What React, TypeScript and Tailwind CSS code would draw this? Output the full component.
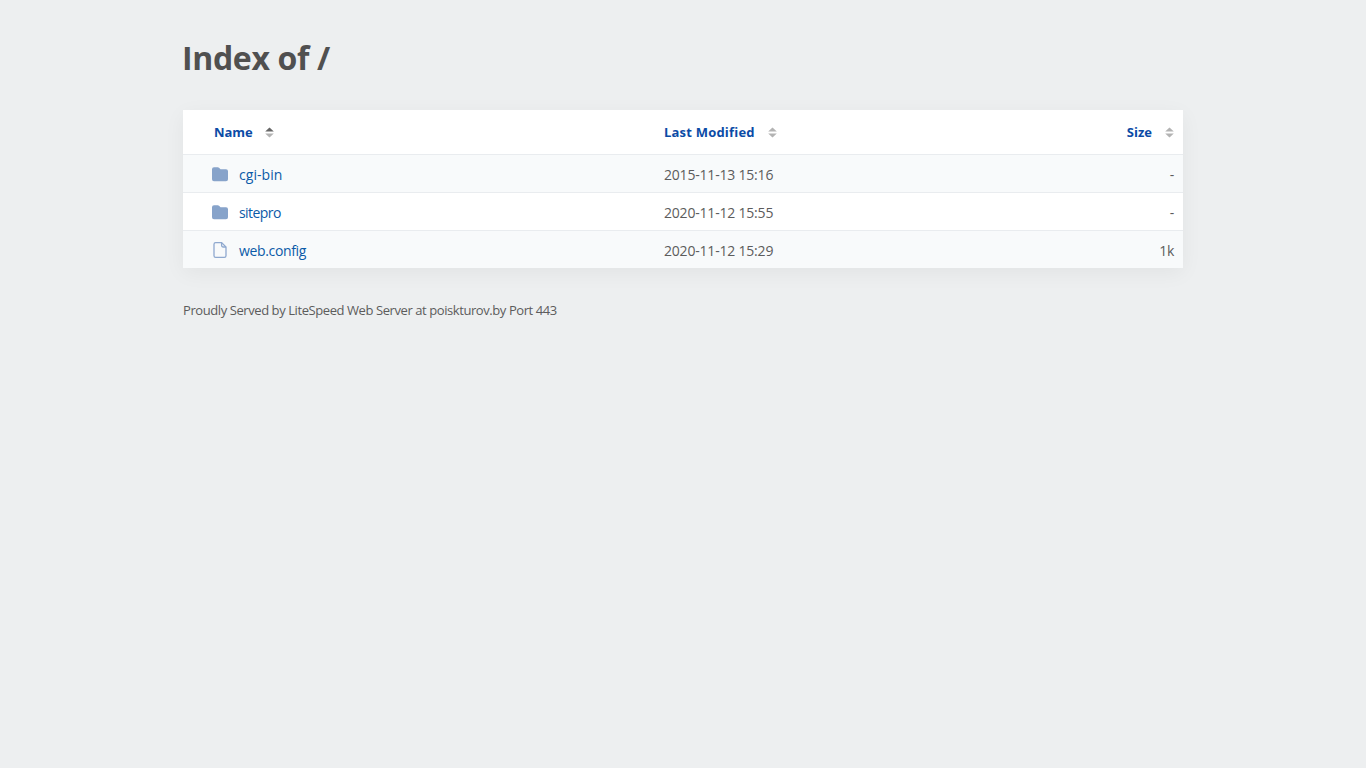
const folder = "M0 2.2A2 2 0 0 1 2 .2h3.7c.5 0 1 .2 1.35.55L8.5 2.2h5.5a2 2 0 0 1 2 2v8a2 2 0 0 1-2 2H2a2 2 0 0 1-2-2z";

function Sort({ active }: { active?: boolean }) {
  return (
    <svg width="9" height="11" viewBox="0 0 9 11" className="block">
      <path d="M4.5 0.5 L8.8 4.6 L0.2 4.6 Z" fill={active ? "#666666" : "#b3b3b3"} />
      <path d="M0.2 6.4 L8.8 6.4 L4.5 10.5 Z" fill="#b3b3b3" />
    </svg>
  );
}

function Icon({ file }: { file?: boolean }) {
  if (file) {
    return (
      <svg width="14" height="16" viewBox="0 0 14 16" fill="none" stroke="#8fa9cf" strokeWidth="1.3" className="block">
        <path d="M1 2.2A1.6 1.6 0 0 1 2.6.65H8.6L13 5v8.8a1.6 1.6 0 0 1-1.6 1.55H2.6A1.6 1.6 0 0 1 1 13.8z" />
        <path d="M8.6.65V3.6A1.4 1.4 0 0 0 10 5h3" />
      </svg>
    );
  }
  return (
    <svg width="16" height="15" viewBox="0 0 16 15" className="block">
      <path d={folder} fill="#87a3ca" />
    </svg>
  );
}

const rows = [
  { name: "cgi-bin", date: "2015-11-13 15:16", size: "-", rowClass: "h-[38px] border-b border-[#e9ecef] bg-[#f8fafb]", nameClass: "tracking-[0.05px]" },
  { name: "sitepro", date: "2020-11-12 15:55", size: "-", rowClass: "h-[38px] border-b border-[#e9ecef] bg-white", nameClass: "tracking-[-0.55px]" },
  { name: "web.config", date: "2020-11-12 15:29", size: "1k", rowClass: "h-[37px] bg-[#f8fafb]", nameClass: "tracking-[-0.35px]", file: true },
];

export default function App() {
  return (
    <div className="min-h-screen bg-[#edeff0] font-['Open_Sans',sans-serif] text-[14px] text-[#5c5c5c]">
      <div className="mx-auto w-[1000px] pt-[37px]">
        <h1 className="-ml-px h-[43px] text-[32px] leading-[42px] font-bold text-[#505050] tracking-[-0.35px]">Index of /</h1>
        <div className="mt-[30px] bg-white shadow-[0_5px_20px_rgba(0,0,0,0.05)]">
          <div className="flex h-[45px] items-center border-b border-[#e9ecef] pt-[1px] font-bold text-[13px] text-[#0b4ba6]">
            <div className="flex w-[481px] items-center pl-[31px] tracking-[-0.1px]">
              <span>Name</span>
              <span className="ml-[13px]"><Sort active /></span>
            </div>
            <div className="flex flex-1 items-center tracking-[0.2px]">
              <span>Last Modified</span>
              <span className="ml-[13px]"><Sort /></span>
            </div>
            <div className="flex items-center pr-[9px]">
              <span>Size</span>
              <span className="ml-[13px]"><Sort /></span>
            </div>
          </div>
          {rows.map((r) => (
            <div key={r.name} className={`flex items-center pt-[1px] ${r.rowClass}`}>
              <div className="flex w-[481px] items-center pl-[27px]">
                <span className="flex w-[20px] justify-center pr-[1px]"><Icon file={r.file} /></span>
                <span className={`ml-[9px] text-[#0b5aa8] ${r.nameClass}`}>{r.name}</span>
              </div>
              <div className="flex-1 tracking-[-0.2px]">{r.date}</div>
              <div className="pr-[9px] tracking-[-0.35px]">{r.size}</div>
            </div>
          ))}
        </div>
        <div className="mt-[32px] text-[13px] leading-[20px] tracking-[-0.42px]">Proudly Served by LiteSpeed Web Server at poiskturov.by Port 443</div>
      </div>
    </div>
  );
}
